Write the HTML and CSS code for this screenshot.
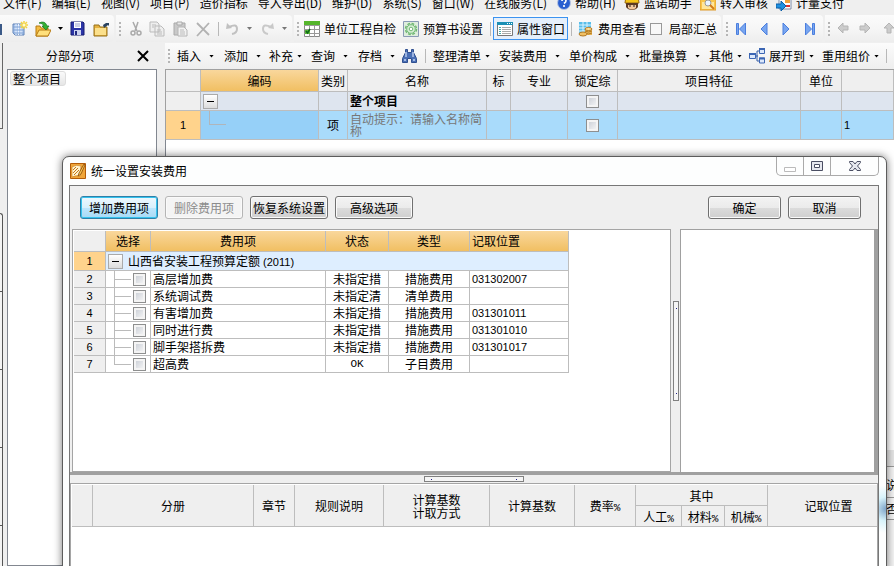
FILE: index.html
```html
<!DOCTYPE html>
<html lang="zh-CN">
<head>
<meta charset="utf-8">
<title>统一设置安装费用</title>
<link rel="stylesheet" href="styles.css">
</head>
<body>
<div class="app">
  <nav class="menubar">
    <button>文件(F)</button><button>编辑(E)</button><button>视图(V)</button><button>项目(P)</button><button>造价指标</button><button>导入导出(D)</button><button>维护(D)</button><button>系统(S)</button><button>窗口(W)</button><button>在线服务(L)</button>
    <div class="extras">
    <button><svg class="mi" viewBox="0 0 14 16"><circle cx="7" cy="8" r="6.5" fill="#2a5fd0" stroke="#b9c6e4"/><path d="M5 6q0-2 2-2t2 2q0 1-2 2.500M7 10v2" fill="none" stroke="#fff" stroke-width="1.600"/></svg>帮助(H)</button>
    <button><svg class="mi wide" viewBox="0 0 16 16"><path d="M1 8q0-7 7-7t7 7z" fill="#f5c518" stroke="#9a6a10"/><path d="M2 8h12v4q-2 3-6 3t-6-3z" fill="#5d3a22"/><path d="M4 10h8v3q-4 3-8 0z" fill="#f2c79c"/><path d="M5 11h2M9 11h2" stroke="#222"/></svg>蓝诺助手</button>
    <button><svg class="mi wide" viewBox="0 0 16 16"><path d="M0 2h6l2 2h8v11H0z" fill="#f8c54a" stroke="#e09a28"/><path d="M2 7h12v7H2z" fill="#ffe69b"/><circle cx="8" cy="8" r="3" fill="#e9f4ff" stroke="#999"/><path d="M10 10l4 4" stroke="#d27a1a" stroke-width="2"/></svg>转入审核</button>
    <button><svg class="mi wide" viewBox="0 0 16 16"><path d="M3 1h12v13H3z" fill="#fff" stroke="#7c8ca8"/><path d="M9 3h5v5H9z" fill="#f2a33c"/><path d="M8 11h6" stroke="#d33" stroke-width="2"/><path d="M0 9h5V6l5 5-5 5v-3H0z" fill="#2191e0" stroke="#0b5ea8"/></svg>计量支付</button>
    </div>
  </nav>

  <div class="toolbars">
    <div class="seg file">
      <svg class="ic" viewBox="0 0 16 16"><path d="M0 3h2v11H0z" fill="#3b5a88"/></svg>
      <button aria-label="新建"><svg class="ic" viewBox="0 0 16 16"><path d="M1 3h11v11H3l-2-2z" fill="#b4cdf2" stroke="#5f82b8"/><path d="M4 3v11M6.500 3v11M9 3v11" stroke="#eef5ff"/><path d="M1 6h11M1 9h11M1 12h11" stroke="#7d9fd0"/><path d="M12 0v8M8 4h8M9 1l6 6M15 1L9 7" stroke="#f5d340" stroke-width="1.500"/><circle cx="12" cy="4" r="1.500" fill="#fffbd0"/></svg></button>
      <button aria-label="打开"><svg class="ic" viewBox="0 0 16 16"><path d="M1 5h4l1 2h7v8H1z" fill="#f5bd41" stroke="#b67a12"/><path d="M1 15l3-6h12l-3 6z" fill="#ffe07c" stroke="#b67a12"/><path d="M4 2q6-3 8 3h2l-3 4-4-4h2q-1-3-5-3z" fill="#34b233" stroke="#13751c" stroke-width=".7"/></svg></button>
      <i class="arrow"></i>
      <button aria-label="保存"><svg class="ic" viewBox="0 0 16 16"><path d="M1 1h12l1 1v12H1z" fill="#2c35a8" stroke="#171c70"/><path d="M4 1h7v6H4z" fill="#fff"/><path d="M5 3h5M5 5h5" stroke="#9aa2cf"/><path d="M4 9h7v5H4z" fill="#cdd4f0"/><path d="M5 10h2v4H5z" fill="#222a80"/></svg></button>
      <button aria-label="目录"><svg class="ic" viewBox="0 0 16 16"><path d="M1 4h5l1 2h7v9H1z" fill="#e6b13f" stroke="#94701c"/><path d="M2 7h11v7H2z" fill="#fbe08c"/><path d="M10 4l3-2h3v3l-1-1-4 3z" fill="#29425f"/></svg></button>
    </div>
    <div class="seg edit">
      <i class="grip"></i>
      <button aria-label="剪切" disabled><svg class="ic" viewBox="0 0 16 16"><path d="M4 1l4 9M9 1l-3 9" stroke="#aaa" stroke-width="1.500"/><circle cx="4" cy="12" r="2" fill="none" stroke="#aaa" stroke-width="1.500"/><circle cx="10" cy="12" r="2" fill="none" stroke="#aaa" stroke-width="1.500"/></svg></button>
      <button aria-label="复制" disabled><svg class="ic" viewBox="0 0 16 16"><path d="M1 1h7l2 2v8H1zM6 5h6l3 3v7H6z" fill="#eee" stroke="#bbb"/><path d="M3 4h4M3 6h2M8 9h4M8 11h5M8 13h5" stroke="#bbb"/></svg></button>
      <button aria-label="粘贴" disabled><svg class="ic" viewBox="0 0 16 16"><path d="M1 2h11v12H1z" fill="#c9c9c9" stroke="#aaa"/><path d="M4 1h5v3H4z" fill="#e8e8e8" stroke="#aaa"/><path d="M5 6h6l3 3v6H5z" fill="#f1f1f1" stroke="#b5b5b5"/><path d="M7 9h4M7 11h5M7 13h5" stroke="#bbb"/></svg></button>
      <button aria-label="删除" disabled><svg class="ic" viewBox="0 0 16 16"><path d="M1 2l12 12M13 2L1 15" stroke="#b2b2b2" stroke-width="1.800"/></svg></button>
      <i class="sep"></i>
      <button aria-label="撤销" disabled><svg class="ic" viewBox="0 0 16 16"><path d="M3 6q8-4 8 2 0 4-5 5" fill="none" stroke="#c1c1c1" stroke-width="2"/><path d="M0 8l1-6 5 5z" fill="#c1c1c1"/></svg></button>
      <i class="arrow dim"></i>
      <button aria-label="重做" disabled><svg class="ic" viewBox="0 0 16 16"><path d="M10 6q-8-4-8 2 0 4 5 5" fill="none" stroke="#c9c9c9" stroke-width="2"/><path d="M13 8l-1-6-5 5z" fill="#c9c9c9"/></svg></button>
      <i class="arrow dim"></i>
    </div>
    <div class="seg view">
      <i class="grip"></i>
      <button><svg class="ic" viewBox="0 0 16 16"><path d="M.5.5h15v15H.5z" fill="#fff" stroke="#888"/><path d="M0 0h16v4H0z" fill="#55b52c"/><path d="M0 4.500h16M0 8.500h16M0 12.500h16M5.500 4v12M10.500 4v12" stroke="#999"/><path d="M1 9h5v4H1z" fill="#5cb837"/><path d="M2 10l1.500 2L6 8" fill="none" stroke="#0d6a18" stroke-width="1.500"/></svg>单位工程自检</button>
      <button><svg class="ic" viewBox="0 0 16 16"><path d="M.5.5h15v15H.5z" fill="#dfeedd" stroke="#8a9ab5"/><circle cx="8" cy="8" r="5.500" fill="none" stroke="#6fb873" stroke-width="1.500" stroke-dasharray="2.800 1.500"/><circle cx="8" cy="8" r="4.300" fill="#d9efd7" stroke="#6fb873"/><circle cx="8" cy="8" r="1.800" fill="#fff" stroke="#6fb873"/></svg>预算书设置</button>
      <i class="sep"></i>
      <button class="active"><svg class="ic" viewBox="0 0 16 16"><path d="M.5 1.500h15v13H.5z" fill="#fff" stroke="#777"/><path d="M0 1h16v3H0z" fill="#1b8fb5"/><path d="M10 2.500h1M12 2.500h1M14 2.500h1" stroke="#fff"/><path d="M2 6.500h2M2 8.500h2M2 10.500h2M2 12.500h2" stroke="#4aa"/><path d="M5 6.500h9M5 8.500h9M5 10.500h9M5 12.500h9" stroke="#aaa"/></svg>属性窗口</button>
      <i class="sep"></i>
      <button><svg class="ic" viewBox="0 0 16 16"><path d="M1 1h12v11H1z" fill="#59bde9"/><path d="M1 4h12M1 7h12M1 10h12M5 1v11M9 1v11" stroke="#d9f3ff"/><path d="M7 8h7v6H7z" fill="#e6b455"/><ellipse cx="10.500" cy="8" rx="3.500" ry="1.500" fill="#ffe09a" stroke="#b37a24"/><path d="M7 10q3.500 2 7 0M7 12q3.500 2 7 0" fill="none" stroke="#b37a24"/><ellipse cx="5" cy="13" rx="4" ry="2" fill="#f0c064" stroke="#b37a24"/></svg>费用查看</button>
      <label class="check"><input type="checkbox">局部汇总</label>
    </div>
    <div class="seg nav">
      <i class="grip"></i>
      <button aria-label="首条"><svg class="ic" viewBox="0 0 16 16"><path d="M.5 2.500h2v11h-2zM9.500 2v12l-6-6z" fill="#78a6f0" stroke="#4b7ede"/></svg></button>
      <button aria-label="上一条"><svg class="ic" viewBox="0 0 16 16"><path d="M7 2v12L1 8z" fill="#78a6f0" stroke="#4b7ede"/></svg></button>
      <button aria-label="下一条"><svg class="ic" viewBox="0 0 16 16"><path d="M1 2v12l6-6z" fill="#78a6f0" stroke="#4b7ede"/></svg></button>
      <button aria-label="末条"><svg class="ic" viewBox="0 0 16 16"><path d="M7.500 2.500h2v11h-2zM.5 2v12l6-6z" fill="#78a6f0" stroke="#4b7ede"/></svg></button>
    </div>
    <div class="seg move">
      <i class="grip"></i>
      <button aria-label="左移" disabled><svg class="ic" viewBox="0 0 16 16"><path d="M1 7l5-5v3h5v4H6v3z" fill="#ccc" stroke="#b5b5b5"/></svg></button>
      <button aria-label="右移" disabled><svg class="ic" viewBox="0 0 16 16"><path d="M11 7L6 2v3H1v4h5v3z" fill="#ccc" stroke="#b5b5b5"/></svg></button>
      <button aria-label="上移" disabled><svg class="ic" viewBox="0 0 16 16"><path d="M6 2l5 5H8v5H4V7H1z" fill="#ccc" stroke="#b5b5b5"/></svg></button>
    </div>
  </div>

  <div class="workspace">
    <div class="gutter"><div class="tab-a"></div><div class="tab-b"></div></div>
    <aside class="side">
      <header class="side-head"><span>分部分项</span><button aria-label="关闭面板"><svg viewBox="0 0 12 12"><path d="M1 1l10 10M11 1L1 11" stroke="#000" stroke-width="2"/></svg></button></header>
      <div class="tree"><span class="node">整个项目</span></div>
    </aside>
    <main class="main">
      <div class="actions">
        <i class="grip"></i>
        <button>插入<i class="arrow"></i></button>
        <button>添加<i class="arrow"></i></button>
        <button class="tight">补充<i class="arrow"></i></button>
        <button>查询<i class="arrow"></i></button>
        <button>存档<i class="arrow"></i></button>
        <button aria-label="查找"><svg class="ic" viewBox="0 0 16 16"><path d="M3.500 1.500h2v3h4v-3h2v3l3 6v4h-5v-4h-4v4h-5v-4l3-6z" fill="#4a6fb5" stroke="#2f4f90"/><path d="M4 4v5M11 4v5M2 12h2M11 12h2" stroke="#c5d6f5" stroke-width="1.300"/></svg></button>
        <i class="sep"></i>
        <button class="tight">整理清单<i class="arrow"></i></button>
        <button>安装费用<i class="arrow"></i></button>
        <button>单价构成<i class="arrow"></i></button>
        <button>批量换算<i class="arrow"></i></button>
        <button class="tight">其他<i class="arrow"></i></button>
        <button class="tight"><svg class="ic" viewBox="0 0 16 16"><path d="M5 8h4M8 3v10M8 3h3M8 13h3" stroke="#345ca6" fill="none"/><path d="M.5 5.500h6v5h-6zM10.500.5h5v5h-5zM10.500 10h5v5h-5z" fill="#dce8fb" stroke="#3c66b4"/><path d="M0 6h7M10 1h6M10 10.500h6" stroke="#3c66b4" stroke-width="2"/></svg>展开到<i class="arrow"></i></button>
        <button class="tight">重用组价<i class="arrow"></i></button>
        <i class="sep"></i>
      </div>
      <table class="grid items">
        <colgroup><col class="c35"><col class="c118"><col class="c29"><col class="c139"><col class="c24"><col class="c57"><col class="c50"><col class="c183"><col class="c41"><col></colgroup>
        <thead><tr><th></th><th class="gold">编码</th><th>类别</th><th>名称</th><th>标</th><th>专业</th><th>锁定综</th><th>项目特征</th><th>单位</th><th></th></tr></thead>
        <tbody>
          <tr class="root"><td class="no"></td><td><div class="fold"></div></td><td></td><td><b>整个项目</b></td><td></td><td></td><td class="mid"><input type="checkbox" aria-label="锁定整个项目"></td><td></td><td></td><td></td></tr>
          <tr class="current"><td class="no on num">1</td><td class="code"><div class="stem"></div></td><td class="mid">项</td><td class="hint">自动提示：请输入名称简称</td><td></td><td></td><td class="mid"><input type="checkbox" aria-label="锁定第1行"></td><td></td><td></td><td class="num">1</td></tr>
        </tbody>
      </table>
      <section class="under">
        <div class="strip"></div><div class="cell tall">说</div><div class="cell">否</div>
      </section>
    </main>
  </div>

  <section class="dialog" role="dialog" aria-labelledby="dlg-title">
    <header class="titlebar">
      <svg class="logo" viewBox="0 0 16 16"><path d="M.5.5h15v15H.5z" fill="#f0a63a" stroke="#b45c08"/><path d="M2 4q4-3 9-1l-1 10q-4-1-8 1z" fill="#fff3cf" stroke="#c57718" stroke-width=".6"/><path d="M3 7l3-3M3 10l5-5M4 12l5-5" stroke="#c57718"/><path d="M14 1L9 10l-1 3 3-2 4-9z" fill="#f6c655" stroke="#8b4a08" stroke-width=".8"/></svg>
      <h1 id="dlg-title">统一设置安装费用</h1>
      <div class="winbtns">
        <button aria-label="最小化" disabled><svg viewBox="0 0 14 12"><path d="M1.500 7.500h11v4h-11z" fill="#fff" stroke="#bbb"/></svg></button>
        <button aria-label="最大化"><svg viewBox="0 0 14 12"><path d="M1.500 1.500h11v9h-11z" fill="#e5e7ee" stroke="#4a4e63"/><path d="M4.500 4.500h5v3h-5z" fill="#fff" stroke="#4a4e63"/></svg></button>
        <button aria-label="关闭"><svg viewBox="0 0 14 12"><path d="M1.500 1.500h3.500l2 2.500 2-2.500h3.500v1L9.500 6l3 3.500v1H9L7 8l-2 2.500H1.500v-1l3-3.500-3-3.500z" fill="#e5e7ee" stroke="#4a4e63"/></svg></button>
      </div>
    </header>
    <div class="client">
      <div class="buttons">
        <button class="btn primary">增加费用项</button><button class="btn" disabled>删除费用项</button><button class="btn">恢复系统设置</button><button class="btn">高级选项</button>
        <span class="grow"></span>
        <button class="btn small">确定</button><button class="btn small">取消</button>
      </div>
      <div class="panes">
        <div class="pane">
          <table class="grid fees">
            <colgroup><col class="c32"><col class="c45"><col class="c175"><col class="c63"><col class="c81"><col class="c99"></colgroup>
            <thead><tr><th></th><th class="gold">选择</th><th class="gold">费用项</th><th class="gold">状态</th><th class="gold">类型</th><th class="gold left">记取位置</th></tr></thead>
            <tbody>
              <tr class="group"><td class="no on num">1</td><td colspan="5"><div class="fold"><span>山西省安装工程预算定额<span class="num"> (2011)</span></span></div></td></tr>
              <tr><td class="no num">2</td><td><label class="branch"><input type="checkbox" aria-label="高层增加费"></label></td><td>高层增加费</td><td class="mid">未指定措</td><td class="mid">措施费用</td><td class="num">031302007</td></tr>
              <tr><td class="no num">3</td><td><label class="branch"><input type="checkbox" aria-label="系统调试费"></label></td><td>系统调试费</td><td class="mid">未指定清</td><td class="mid">清单费用</td><td class="num"></td></tr>
              <tr><td class="no num">4</td><td><label class="branch"><input type="checkbox" aria-label="有害增加费"></label></td><td>有害增加费</td><td class="mid">未指定措</td><td class="mid">措施费用</td><td class="num">031301011</td></tr>
              <tr><td class="no num">5</td><td><label class="branch"><input type="checkbox" aria-label="同时进行费"></label></td><td>同时进行费</td><td class="mid">未指定措</td><td class="mid">措施费用</td><td class="num">031301010</td></tr>
              <tr><td class="no num">6</td><td><label class="branch"><input type="checkbox" aria-label="脚手架搭拆费"></label></td><td>脚手架搭拆费</td><td class="mid">未指定措</td><td class="mid">措施费用</td><td class="num">031301017</td></tr>
              <tr><td class="no num">7</td><td><label class="branch last"><input type="checkbox" aria-label="超高费"></label></td><td>超高费</td><td class="mid mono">OK</td><td class="mid">子目费用</td><td class="num"></td></tr>
            </tbody>
          </table>
        </div>
        <div class="vsplit"><i class="handle"></i></div>
        <div class="preview"></div>
      </div>
      <div class="hsplit"><i class="handle"></i></div>
      <div class="lower">
        <table class="grid rules">
          <colgroup><col class="c21"><col class="c161"><col class="c41"><col class="c89"><col class="c106"><col class="c85"><col class="c61"><col class="c46"><col class="c43"><col class="c43"><col></colgroup>
          <thead>
            <tr><th rowspan="2"></th><th rowspan="2">分册</th><th rowspan="2">章节</th><th rowspan="2">规则说明</th><th rowspan="2">计算基数<br>计取方式</th><th rowspan="2">计算基数</th><th rowspan="2">费率<span class="mono">%</span></th><th colspan="3">其中</th><th rowspan="2" class="wide">记取位置</th></tr>
            <tr><th>人工<span class="mono">%</span></th><th>材料<span class="mono">%</span></th><th>机械<span class="mono">%</span></th></tr>
          </thead>
        </table>
      </div>
    </div>
  </section>
</div>
</body>
</html>
```

FILE: styles.css
```css
* { box-sizing: border-box; }

body {
  margin: 0;
  overflow: hidden;
  background: #efefef;
  color: #000;
  font: 12px/14px "Noto Sans CJK SC", sans-serif;
}

button {
  padding: 0;
  border: 0;
  background: none;
  color: inherit;
  font: inherit;
  white-space: nowrap;
}

svg { display: block; flex: none; }

.app {
  position: relative;
  display: flex;
  flex-direction: column;
  height: 100vh;
  overflow: hidden;
}

/* Menu bar, scrolled partly past the top edge */
.menubar {
  display: flex;
  align-items: center;
  gap: 10px;
  height: 24px;
  margin-top: -9px;
  padding-left: 3px;
  flex: none;
}
.menubar button { display: flex; align-items: center; gap: 4px; flex: none; }
.extras { display: flex; gap: 8px; }
.mi { width: 14px; height: 16px; }
.mi.wide { width: 16px; }

/* Toolbars */
.toolbars { display: flex; gap: 2px; height: 27px; margin-bottom: 1px; flex: none; }
.seg {
  display: grid;
  align-items: center;
  justify-items: start;
  flex: none;
  border-radius: 0 4px 4px 0;
  background: linear-gradient(#fbfbfb, #f6f6f6 50%, #ededed);
}
.seg button { display: flex; align-items: center; gap: 4px; }
.ic { width: 16px; height: 16px; }
.file { grid-template-columns: 12px 23px 23px 12px 23px 21px; }
.edit { grid-template-columns: 13px 20px 24px 23px 22px 8px 21px 14px 21px 10px; }
.view { grid-template-columns: 10px 99px 87px 3px 78px 7px 72px 71px; }
.nav { grid-template-columns: 13px 24px 22px 23px 18px; }
.move { flex: auto; grid-template-columns: 12px 22px 24px 1fr; }

.grip {
  width: 2px;
  height: 14px;
  margin-left: 3px;
  background: repeating-linear-gradient(#b5b5b5 0 2px, transparent 2px 4px);
}
.sep { width: 1px; height: 14px; background: #b8b8b8; }
.arrow {
  width: 5px;
  height: 3px;
  flex: none;
  background: #000;
  clip-path: polygon(0 0, 100% 0, 50% 100%);
}
.arrow.dim { background: #777; }

.seg .active {
  height: 23px;
  width: 75px;
  padding-left: 3px;
  border: 1px solid #3c93f0;
  background: #e5effb;
}
.check { display: flex; align-items: center; gap: 7px; }
.check input {
  appearance: none;
  width: 12px;
  height: 12px;
  margin: 0;
  border: 1px solid #999;
  background: #f8f8f8;
}

/* Workspace */
.workspace { display: flex; flex: auto; min-height: 0; }
.gutter { width: 7px; flex: none; display: flex; flex-direction: column; gap: 84px; }
.tab-a { width: 3px; height: 86px; border-right: 1px solid #666; border-bottom: 1px solid #666; }
.tab-b {
  width: 3px;
  flex: auto;
  border: solid #555;
  border-width: 1px 1px 0 0;
  border-radius: 0 3px 0 0;
  background: repeating-linear-gradient(#f4f4f4 0 77px, #555 77px 78px);
}
.side { width: 150px; flex: none; display: flex; flex-direction: column; margin-right: 8px; }
.side-head { display: flex; align-items: center; height: 26px; padding: 0 8px 0 39px; justify-content: space-between; flex: none; }
.side-head svg { width: 12px; height: 12px; }
.tree { flex: auto; padding: 1px 2px; border: 1px solid #828790; background: #fff; }
.node {
  display: inline-block;
  padding: 0 4px 0 2px;
  border: 1px solid #ddd;
  border-radius: 3px;
  background: linear-gradient(#fafafa, #e6e6e6);
  line-height: 13px;
}

.main { flex: auto; min-width: 0; display: flex; flex-direction: column; }
.actions {
  display: grid;
  grid-template-columns: 12px 47px 45px 42px 47px 44px 23px 8px 66px 70px 70px 70px 40px 73px 64px 1fr;
  align-items: center;
  justify-items: start;
  height: 26px;
  flex: none;
  background: linear-gradient(#fbfbfb, #eee);
}
.actions button { display: flex; align-items: center; gap: 8px; }
.actions .tight { gap: 4px; }

/* Data grids */
.grid { border-collapse: separate; border-spacing: 0; table-layout: fixed; }
.grid th, .grid td {
  padding: 0;
  border: solid #bdbdbd;
  border-width: 0 1px 1px 0;
  overflow: hidden;
  line-height: 12px;
  text-align: left;
}
.grid th { background: #efefef; font-weight: 400; text-align: center; white-space: nowrap; }
.grid td { padding-left: 2px; }
.grid .gold { background: linear-gradient(#f9d79c, #f1bf62); }
.grid .left { text-align: left; padding-left: 2px; }
.grid .mid { padding: 0; text-align: center; }
.grid .no { padding: 0; text-align: center; background: #efefef; }
.grid .on { background: #ffd38c; }
.num { font-family: "Liberation Sans", sans-serif; font-size: 11px; }
.mono { font-family: "Liberation Mono", monospace; font-size: 11px; }
.grid span.mono { line-height: 8px; }
.grid input {
  appearance: none;
  display: block;
  width: 13px;
  height: 13px;
  margin: 0 auto;
  border: 1px solid #8e8f8f;
  background: linear-gradient(135deg, #c5cad2, #fafafa);
  box-shadow: inset 0 0 0 2px #f4f4f4;
}

.items { width: 100%; flex: none; border: solid #a0a0a0; border-width: 1px 0 0 1px; }
.items thead tr { height: 22px; }
.items .root { height: 19px; background: #dee5ef; }
.items .current { height: 29px; background: #a9dbfb; }
.items .code { background: #96d0f8; }
.items .hint { color: #777; }
.fold { display: flex; align-items: center; gap: 5px; }
.fold::before {
  content: "";
  width: 13px;
  height: 13px;
  border: 1px solid #aaa;
  background: linear-gradient(#000, #000) center / 7px 1px no-repeat, linear-gradient(#fff, #dcdcdc);
}
.stem { width: 17px; height: 14px; margin: 0 0 14px 6px; border: solid #b0b5ba; border-width: 0 0 1px 1px; }

.under {
  flex: auto;
  display: flex;
  flex-direction: column;
  align-items: stretch;
  padding-top: 310px;
  border-left: 1px solid #828790;
  background: linear-gradient(#fff, #fff) top / 100% 310px no-repeat, #f5f5f5;
}
.strip { height: 17px; border-bottom: 1px solid #999; background: #e6e6e6; flex: none; }
.cell { height: 22px; border-bottom: 1px solid #999; text-align: right; margin-right: -4px; line-height: 22px; flex: none; }
.cell.tall { height: 31px; line-height: 36px; }

/* Dialog window */
.dialog {
  position: absolute;
  top: 156px;
  left: 62px;
  right: 7px;
  bottom: -6px;
  display: flex;
  flex-direction: column;
  padding: 0 7px 0 6px;
  border: 1px solid #5c5c5c;
  border-radius: 7px 7px 0 0;
  background: radial-gradient(circle at 100% 352px, #7da3c8 0, #d8f3fa 12px, transparent 24px), #fdfefe;
  box-shadow: 0 0 8px rgba(0, 0, 0, .55);
}
.titlebar { display: flex; align-items: center; height: 28px; flex: none; }
.logo { width: 16px; height: 16px; margin: 0 5px 0 1px; }
.titlebar h1 { margin: 0; font: inherit; }
.winbtns {
  display: flex;
  align-self: flex-start;
  height: 19px;
  margin-left: auto;
  border: 1px solid #aaa;
  border-top: 0;
  border-radius: 0 0 5px 5px;
}
.winbtns button { display: flex; align-items: center; justify-content: center; width: 27px; border-right: 1px solid #aaa; }
.winbtns button:last-child { width: 47px; border: 0; }
.winbtns svg { width: 14px; height: 12px; }

.client {
  flex: auto;
  display: flex;
  flex-direction: column;
  min-height: 0;
  border: 1px solid #777;
  border-bottom: 0;
  background: #efefef;
}
.buttons { display: flex; align-items: center; gap: 7px; height: 43px; padding: 0 17px 0 10px; flex: none; }
.grow { flex: auto; }
.btn {
  width: 78px;
  height: 23px;
  border: 1px solid #707070;
  border-radius: 3px;
  background: linear-gradient(#f3f3f3, #ebebeb 50%, #dcdcdc 50%, #cfcfcf);
  box-shadow: inset 0 0 0 1px #fafafa;
}
.btn.small { width: 73px; }
.btn.primary {
  border-color: #2f7fa8;
  background: linear-gradient(#eef8fe, #d9f0fc 50%, #bee6fd 50%, #a8daf5);
  box-shadow: inset 0 0 0 1px #35c3ee;
}
.btn:disabled { border-color: #b5b5b5; background: #f4f4f4; color: #8c8c8c; }

.panes { display: flex; height: 246px; padding-left: 2px; border-bottom: 3px solid #a0a0a0; flex: none; }
.pane { flex: 597 1 0; padding: 1px 0 0 1px; border: 1px solid #a5a5a5; background: #fff; }
.vsplit { width: 9px; display: flex; align-items: center; justify-content: center; flex: none; }
.preview { flex: 193 1 0; border: solid #a0a0a0; border-width: 1px 4px 0 1px; background: #fff; }
.handle { border: 1px solid #808080; background: #f5f5f5; }
.vsplit .handle {
  width: 6px;
  height: 100px;
  background: linear-gradient(#228, #228) 2px 6px / 1px 1px no-repeat, linear-gradient(#228, #228) 2px 91px / 1px 1px no-repeat, #f5f5f5;
}
.hsplit { display: flex; align-items: center; justify-content: center; height: 8px; flex: none; }
.hsplit .handle {
  width: 100px;
  height: 6px;
  background: linear-gradient(#228, #228) 6px 2px / 1px 1px no-repeat, linear-gradient(#228, #228) 91px 2px / 1px 1px no-repeat, #f5f5f5;
}
.lower { flex: auto; padding: 1px 0 0 1px; border: 1px solid #a5a5a5; background: #fff; }

.fees { width: 495px; }
.fees thead tr { height: 21px; }
.fees tbody tr { height: 17px; }
.fees .group { height: 19px; background: #deeeff; }
.branch {
  display: block;
  width: 42px;
  height: 16px;
  padding: 2px 0 0 25px;
  background: linear-gradient(#bbb, #bbb) 6px 0 / 1px 16px no-repeat, linear-gradient(#bbb, #bbb) 6px 8px / 17px 1px no-repeat;
}
.branch.last { background-size: 1px 8px, 17px 1px; }
.branch input { margin: 0; }

.rules { width: 100%; }
.rules tr { height: 21px; }
.rules th { line-height: 13px; }
.rules .wide { padding-left: 12px; border-right: 0; }

/* Column widths */
.c21 { width: 21px; }
.c24 { width: 24px; }
.c29 { width: 29px; }
.c32 { width: 32px; }
.c35 { width: 35px; }
.c41 { width: 41px; }
.c43 { width: 43px; }
.c45 { width: 45px; }
.c46 { width: 46px; }
.c50 { width: 50px; }
.c57 { width: 57px; }
.c61 { width: 61px; }
.c63 { width: 63px; }
.c81 { width: 81px; }
.c85 { width: 85px; }
.c89 { width: 89px; }
.c99 { width: 99px; }
.c106 { width: 106px; }
.c118 { width: 118px; }
.c139 { width: 139px; }
.c161 { width: 161px; }
.c175 { width: 175px; }
.c183 { width: 183px; }
```
